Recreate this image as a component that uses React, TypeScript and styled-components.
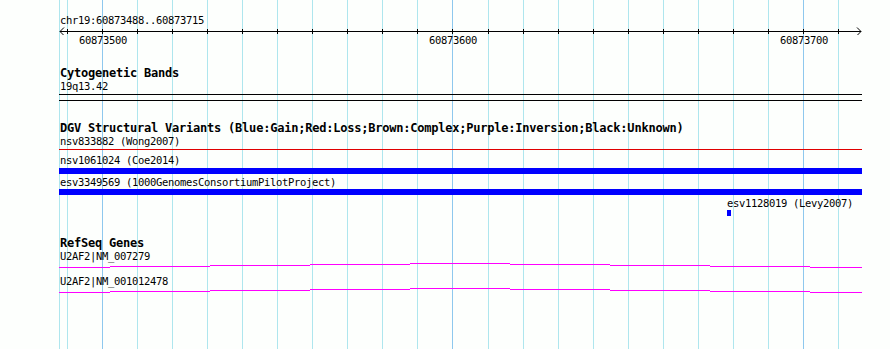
import React from 'react';
import styled, { createGlobalStyle } from 'styled-components';

// region shown: chr19:60873488..60873715, drawn 800px wide starting at x=60
const START = 60873488;
const END = 60873715;
const PX_PER_BP = 800 / (END - START + 1);
const toX = (bp: number) => 60 + (bp - START) * PX_PER_BP;

const GlobalStyle = createGlobalStyle`
  html, body {
    margin: 0;
    padding: 0;
    background: #fdfffd;
  }
`;

const Panel = styled.div`
  position: relative;
  width: 890px;
  height: 349px;
  overflow: hidden;
  background: #fdfffd;
  font-family: "DejaVu Sans Mono", "Liberation Mono", monospace;
  color: #000;
`;

const GridLayer = styled.svg`
  position: absolute;
  left: 0;
  top: 0;
  width: 890px;
  height: 349px;
  z-index: 0;
`;

const Tracks = styled.div`
  position: relative;
  z-index: 1;
  display: flex;
  flex-direction: column;
`;

const Label = styled.div<{ $top?: number; $left?: number }>`
  margin-top: ${(p) => p.$top ?? 0}px;
  padding-left: ${(p) => p.$left ?? 60}px;
  height: 13px;
  line-height: 13px;
  font-size: 10.5px;
  letter-spacing: -0.32px;
  white-space: nowrap;
`;

const TrackTitle = styled.div<{ $top: number }>`
  margin-top: ${(p) => p.$top}px;
  padding-left: 60px;
  height: 13px;
  line-height: 13px;
  font-size: 12px;
  letter-spacing: -0.22px;
  font-weight: bold;
  white-space: nowrap;
`;

const RulerBox = styled.div`
  position: relative;
  height: 20px;
`;

const RulerSvg = styled.svg`
  display: block;
  width: 890px;
  height: 8px;
`;

const TickLabel = styled.span`
  position: absolute;
  top: 7px;
  width: 48px;
  text-align: center;
  font-size: 10.5px;
  letter-spacing: -0.32px;
  line-height: 13px;
`;

const BandBox = styled.div`
  margin-top: 1px;
  margin-left: 59px;
  width: 803px;
  height: 5px;
  border-top: 1px solid #000;
  border-bottom: 1px solid #000;
`;

const Bar = styled.div<{ $top: number; $height: number; $color: string; $left?: number; $width?: number }>`
  margin-top: ${(p) => p.$top}px;
  margin-left: ${(p) => p.$left ?? 59}px;
  width: ${(p) => p.$width ?? 803}px;
  height: ${(p) => p.$height}px;
  background: ${(p) => p.$color};
`;

const GeneLine = styled.svg`
  display: block;
  width: 890px;
  height: 5px;
`;

const gridBps: number[] = [];
for (let bp = 60873490; bp <= END; bp += 10) gridBps.push(bp);

const Grid = () => (
  <GridLayer viewBox="0 0 890 349" shapeRendering="crispEdges">
    <line x1={59.5} y1={0} x2={59.5} y2={349} stroke="#aee6ee" />
    {gridBps.map((bp) => {
      const x = Math.floor(toX(bp)) + 0.5;
      const major = bp % 100 === 0;
      return <line key={bp} x1={x} y1={0} x2={x} y2={349} stroke={major ? '#8ec8ee' : '#aee6ee'} />;
    })}
  </GridLayer>
);

const Ruler = () => (
  <RulerBox>
    <RulerSvg viewBox="0 0 890 8" shapeRendering="crispEdges">
      <line x1={60} y1={4.5} x2={861} y2={4.5} stroke="#000" />
      <polyline points="64,0.5 60,4.5 64,8.5" fill="none" stroke="#000" shapeRendering="auto" />
      <polyline points="857,0.5 861,4.5 857,8.5" fill="none" stroke="#000" shapeRendering="auto" />
      {gridBps.map((bp) => {
        const x = Math.floor(toX(bp)) + 0.5;
        return <line key={bp} x1={x} y1={2} x2={x} y2={7} stroke="#000" />;
      })}
    </RulerSvg>
    {[60873500, 60873600, 60873700].map((bp) => (
      <TickLabel key={bp} style={{ left: Math.floor(toX(bp)) - 23 }}>
        {bp}
      </TickLabel>
    ))}
  </RulerBox>
);

// intron connector: a shallow arc drawn in 1px steps
const arcSteps: [number, number, number][] = [
  [59, 110, 4],
  [110, 210, 3],
  [210, 310, 2],
  [310, 410, 1],
  [410, 510, 0],
  [510, 610, 1],
  [610, 710, 2],
  [710, 810, 3],
  [810, 862, 4],
];

const Transcript = () => (
  <GeneLine viewBox="0 0 890 5" shapeRendering="crispEdges">
    {arcSteps.map(([x1, x2, y]) => (
      <rect key={x1} x={x1} y={y} width={x2 - x1} height={1} fill="#ff00ff" />
    ))}
  </GeneLine>
);

export default function App() {
  return (
    <>
      <GlobalStyle />
      <Panel>
        <Grid />
        <Tracks>
          <Label $top={14}>chr19:60873488..60873715</Label>
          <Ruler />

          <TrackTitle $top={20}>Cytogenetic Bands</TrackTitle>
          <Label>19q13.42</Label>
          <BandBox />

          <TrackTitle $top={21}>
            DGV Structural Variants (Blue:Gain;Red:Loss;Brown:Complex;Purple:Inversion;Black:Unknown)
          </TrackTitle>
          <Label>nsv833882 (Wong2007)</Label>
          <Bar $top={1} $height={1} $color="#e00000" />
          <Label $top={4}>nsv1061024 (Coe2014)</Label>
          <Bar $top={1} $height={6} $color="#0000ff" />
          <Label $top={2}>esv3349569 (1000GenomesConsortiumPilotProject)</Label>
          <Bar $top={0} $height={6} $color="#0000ff" />
          <Label $top={2} $left={727}>esv1128019 (Levy2007)</Label>
          <Bar $top={0} $height={6} $color="#0000ff" $left={727} $width={4} />

          <TrackTitle $top={21}>RefSeq Genes</TrackTitle>
          <Label>U2AF2|NM_007279</Label>
          <Transcript />
          <Label $top={7}>U2AF2|NM_001012478</Label>
          <Transcript />
        </Tracks>
      </Panel>
    </>
  );
}
